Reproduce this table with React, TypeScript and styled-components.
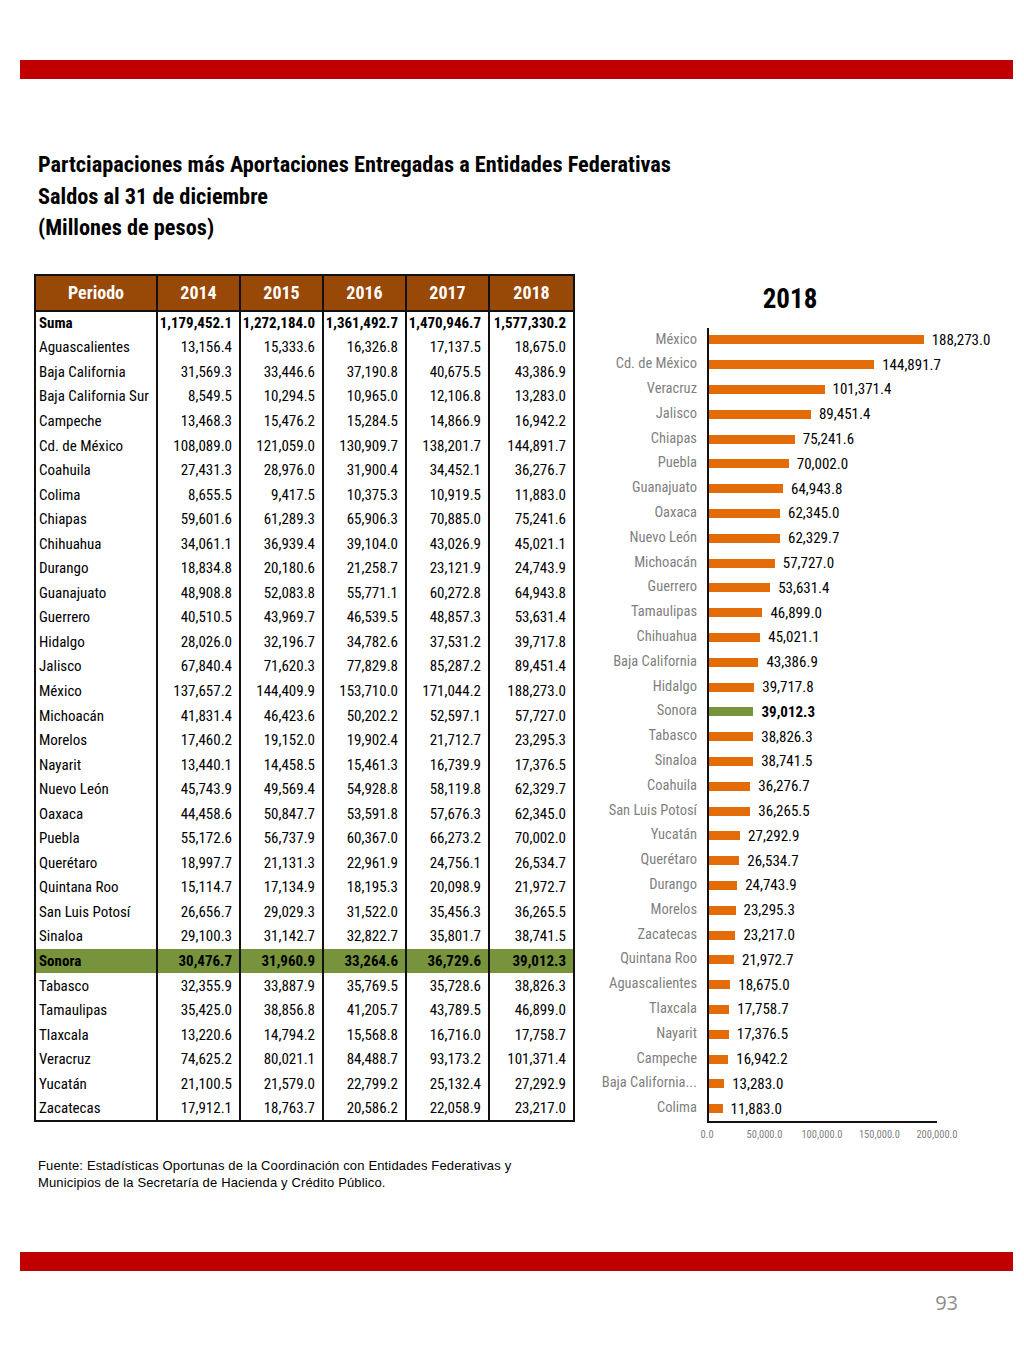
import React from "react";
import styled, { createGlobalStyle } from "styled-components";

const NARROW = `"Liberation Sans Narrow", "Arial Narrow", "Roboto Condensed", "Liberation Sans", sans-serif`;

const GlobalStyle = createGlobalStyle`
  html, body { margin: 0; padding: 0; background: #ffffff; }
  body { font-family: "Liberation Sans", Arial, sans-serif; }
`;

const Page = styled.div`
  width: 1024px;
  height: 1365px;
  padding-top: 60px;
  box-sizing: border-box;
  display: flex;
  flex-direction: column;
`;

const RedBar = styled.div`
  height: 19px;
  margin: 0 11px 0 20px;
  background: #c00000;
`;

const TitleBlock = styled.div`
  margin: 70px 0 0 38px;
  font-family: ${NARROW};
  font-weight: bold;
  font-size: 22.3px;
  line-height: 31.5px;
  color: #000;
`;

const Main = styled.div`
  display: flex;
  align-items: flex-start;
  margin: 30px 0 0 34px;
  gap: 17px;
`;

const Table = styled.table`
  border-collapse: collapse;
  border: 2px solid #111;
  font-family: ${NARROW};
  font-size: 15px;
  table-layout: fixed;
  width: 539px;
`;

const HeadCell = styled.th`
  background: #984807;
  color: #fff;
  font-weight: bold;
  font-size: 18px;
  height: 34px;
  padding: 0;
  text-align: center;
  border: 2px solid #111;
`;

const Row = styled.tr<{ $hl?: boolean; $bold?: boolean }>`
  height: 24.55px;
  background: ${(p) => (p.$hl ? "#77933c" : "transparent")};
  font-weight: ${(p) => (p.$bold || p.$hl ? "bold" : "normal")};
`;

const NameCell = styled.td`
  padding: 0 0 0 3px;
  text-align: left;
  border-right: 2px solid #111;
  white-space: nowrap;
  color: #000;
`;

const NumCell = styled.td`
  padding: 0 7px 0 0;
  text-align: right;
  border-right: 2px solid #111;
  white-space: nowrap;
  color: #000;
`;

const Chart = styled.div`
  width: 400px;
  margin-top: 10px;
  display: flex;
  flex-direction: column;
  margin-left: -2px;
`;

const ChartTitle = styled.div`
  text-align: center;
  font-family: ${NARROW};
  font-weight: bold;
  font-size: 27px;
  line-height: 30px;
  height: 30px;
  margin-bottom: 14px;
`;

const ChartGrid = styled.div`
  display: grid;
  grid-template-columns: 107px 230px;
  column-gap: 10px;
`;

const LabelCol = styled.div`
  display: flex;
  flex-direction: column;
`;

const PlotCol = styled.div`
  display: flex;
  flex-direction: column;
  border-left: 2px solid #111;
  border-bottom: 2px solid #111;
`;

const BarLabel = styled.div`
  height: 24.8px;
  line-height: 24.8px;
  text-align: right;
  font-family: ${NARROW};
  font-size: 14.5px;
  color: #7f7f7f;
  white-space: nowrap;
  overflow: hidden;
`;

const BarRow = styled.div`
  height: 24.8px;
  display: flex;
  align-items: center;
  gap: 8px;
  white-space: nowrap;
`;

const Bar = styled.div<{ $hl?: boolean }>`
  height: 9px;
  background: ${(p) => (p.$hl ? "#77933c" : "#e36c09")};
  flex: none;
`;

const BarValue = styled.span<{ $hl?: boolean }>`
  font-family: ${NARROW};
  font-size: 15px;
  color: #000;
  font-weight: ${(p) => (p.$hl ? "bold" : "normal")};
`;

const TickRow = styled.div`
  display: grid;
  grid-template-columns: 107px 230px;
  column-gap: 10px;
  margin-top: 5px;
`;

const Ticks = styled.div`
  position: relative;
  height: 14px;
`;

const Tick = styled.span`
  position: absolute;
  top: 0;
  transform: translateX(-50%);
  font-family: ${NARROW};
  font-size: 10.5px;
  color: #7f7f7f;
  white-space: nowrap;
`;

const Footer = styled.div`
  margin: 15px 0 0 38px;
  font-family: "Liberation Sans", Arial, sans-serif;
  font-size: 13px;
  letter-spacing: 0.15px;
  line-height: 17px;
  color: #000;
`;

const BottomBar = styled(RedBar)`
  margin-top: auto;
`;

const PageNum = styled.div`
  align-self: flex-end;
  margin: 18px 66px 0 0;
  font-family: "Open Sans", "Liberation Sans", sans-serif;
  font-size: 20px;
  color: #8c8c8c;
  height: 76px;
`;

type R = [string, string, string, string, string, string];

const rows: R[] = [
  ["Aguascalientes", "13,156.4", "15,333.6", "16,326.8", "17,137.5", "18,675.0"],
  ["Baja California", "31,569.3", "33,446.6", "37,190.8", "40,675.5", "43,386.9"],
  ["Baja California Sur", "8,549.5", "10,294.5", "10,965.0", "12,106.8", "13,283.0"],
  ["Campeche", "13,468.3", "15,476.2", "15,284.5", "14,866.9", "16,942.2"],
  ["Cd. de México", "108,089.0", "121,059.0", "130,909.7", "138,201.7", "144,891.7"],
  ["Coahuila", "27,431.3", "28,976.0", "31,900.4", "34,452.1", "36,276.7"],
  ["Colima", "8,655.5", "9,417.5", "10,375.3", "10,919.5", "11,883.0"],
  ["Chiapas", "59,601.6", "61,289.3", "65,906.3", "70,885.0", "75,241.6"],
  ["Chihuahua", "34,061.1", "36,939.4", "39,104.0", "43,026.9", "45,021.1"],
  ["Durango", "18,834.8", "20,180.6", "21,258.7", "23,121.9", "24,743.9"],
  ["Guanajuato", "48,908.8", "52,083.8", "55,771.1", "60,272.8", "64,943.8"],
  ["Guerrero", "40,510.5", "43,969.7", "46,539.5", "48,857.3", "53,631.4"],
  ["Hidalgo", "28,026.0", "32,196.7", "34,782.6", "37,531.2", "39,717.8"],
  ["Jalisco", "67,840.4", "71,620.3", "77,829.8", "85,287.2", "89,451.4"],
  ["México", "137,657.2", "144,409.9", "153,710.0", "171,044.2", "188,273.0"],
  ["Michoacán", "41,831.4", "46,423.6", "50,202.2", "52,597.1", "57,727.0"],
  ["Morelos", "17,460.2", "19,152.0", "19,902.4", "21,712.7", "23,295.3"],
  ["Nayarit", "13,440.1", "14,458.5", "15,461.3", "16,739.9", "17,376.5"],
  ["Nuevo León", "45,743.9", "49,569.4", "54,928.8", "58,119.8", "62,329.7"],
  ["Oaxaca", "44,458.6", "50,847.7", "53,591.8", "57,676.3", "62,345.0"],
  ["Puebla", "55,172.6", "56,737.9", "60,367.0", "66,273.2", "70,002.0"],
  ["Querétaro", "18,997.7", "21,131.3", "22,961.9", "24,756.1", "26,534.7"],
  ["Quintana Roo", "15,114.7", "17,134.9", "18,195.3", "20,098.9", "21,972.7"],
  ["San Luis Potosí", "26,656.7", "29,029.3", "31,522.0", "35,456.3", "36,265.5"],
  ["Sinaloa", "29,100.3", "31,142.7", "32,822.7", "35,801.7", "38,741.5"],
  ["Sonora", "30,476.7", "31,960.9", "33,264.6", "36,729.6", "39,012.3"],
  ["Tabasco", "32,355.9", "33,887.9", "35,769.5", "35,728.6", "38,826.3"],
  ["Tamaulipas", "35,425.0", "38,856.8", "41,205.7", "43,789.5", "46,899.0"],
  ["Tlaxcala", "13,220.6", "14,794.2", "15,568.8", "16,716.0", "17,758.7"],
  ["Veracruz", "74,625.2", "80,021.1", "84,488.7", "93,173.2", "101,371.4"],
  ["Yucatán", "21,100.5", "21,579.0", "22,799.2", "25,132.4", "27,292.9"],
  ["Zacatecas", "17,912.1", "18,763.7", "20,586.2", "22,058.9", "23,217.0"],
];

const suma: R = ["Suma", "1,179,452.1", "1,272,184.0", "1,361,492.7", "1,470,946.7", "1,577,330.2"];

const chartLabel: Record<string, string> = { "Baja California Sur": "Baja California..." };

const chartData = rows
  .map((r) => ({ name: r[0], text: r[5], value: parseFloat(r[5].replace(/,/g, "")) }))
  .sort((a, b) => b.value - a.value);

const SCALE = 228 / 200000;
const ticks = ["0.0", "50,000.0", "100,000.0", "150,000.0", "200,000.0"];

export default function App() {
  return (
    <>
      <GlobalStyle />
      <Page>
        <RedBar />
        <TitleBlock>
          <div>Partciapaciones más Aportaciones Entregadas a Entidades Federativas</div>
          <div>Saldos al 31 de diciembre</div>
          <div>(Millones de pesos)</div>
        </TitleBlock>
        <Main>
          <Table>
            <colgroup>
              <col style={{ width: 122 }} />
              <col style={{ width: 83 }} />
              <col style={{ width: 83 }} />
              <col style={{ width: 83 }} />
              <col style={{ width: 83 }} />
              <col style={{ width: 85 }} />
            </colgroup>
            <thead>
              <tr>
                {["Periodo", "2014", "2015", "2016", "2017", "2018"].map((h) => (
                  <HeadCell key={h}>{h}</HeadCell>
                ))}
              </tr>
            </thead>
            <tbody>
              <Row $bold>
                <NameCell>{suma[0]}</NameCell>
                {suma.slice(1).map((v, i) => (
                  <NumCell key={i}>{v}</NumCell>
                ))}
              </Row>
              {rows.map((r) => (
                <Row key={r[0]} $hl={r[0] === "Sonora"}>
                  <NameCell>{r[0]}</NameCell>
                  {r.slice(1).map((v, i) => (
                    <NumCell key={i}>{v}</NumCell>
                  ))}
                </Row>
              ))}
            </tbody>
          </Table>
          <Chart>
            <ChartTitle>2018</ChartTitle>
            <ChartGrid>
              <LabelCol>
                {chartData.map((d) => (
                  <BarLabel key={d.name}>{chartLabel[d.name] ?? d.name}</BarLabel>
                ))}
              </LabelCol>
              <PlotCol>
                {chartData.map((d) => {
                  const hl = d.name === "Sonora";
                  return (
                    <BarRow key={d.name}>
                      <Bar $hl={hl} style={{ width: d.value * SCALE }} />
                      <BarValue $hl={hl}>{d.text}</BarValue>
                    </BarRow>
                  );
                })}
              </PlotCol>
            </ChartGrid>
            <TickRow>
              <div />
              <Ticks>
                {ticks.map((t, i) => (
                  <Tick key={t} style={{ left: i * 57.5 }}>
                    {t}
                  </Tick>
                ))}
              </Ticks>
            </TickRow>
          </Chart>
        </Main>
        <Footer>
          <div>Fuente: Estadísticas Oportunas de la Coordinación con Entidades Federativas y</div>
          <div>Municipios de la Secretaría de Hacienda y Crédito Público.</div>
        </Footer>
        <BottomBar />
        <PageNum>93</PageNum>
      </Page>
    </>
  );
}
